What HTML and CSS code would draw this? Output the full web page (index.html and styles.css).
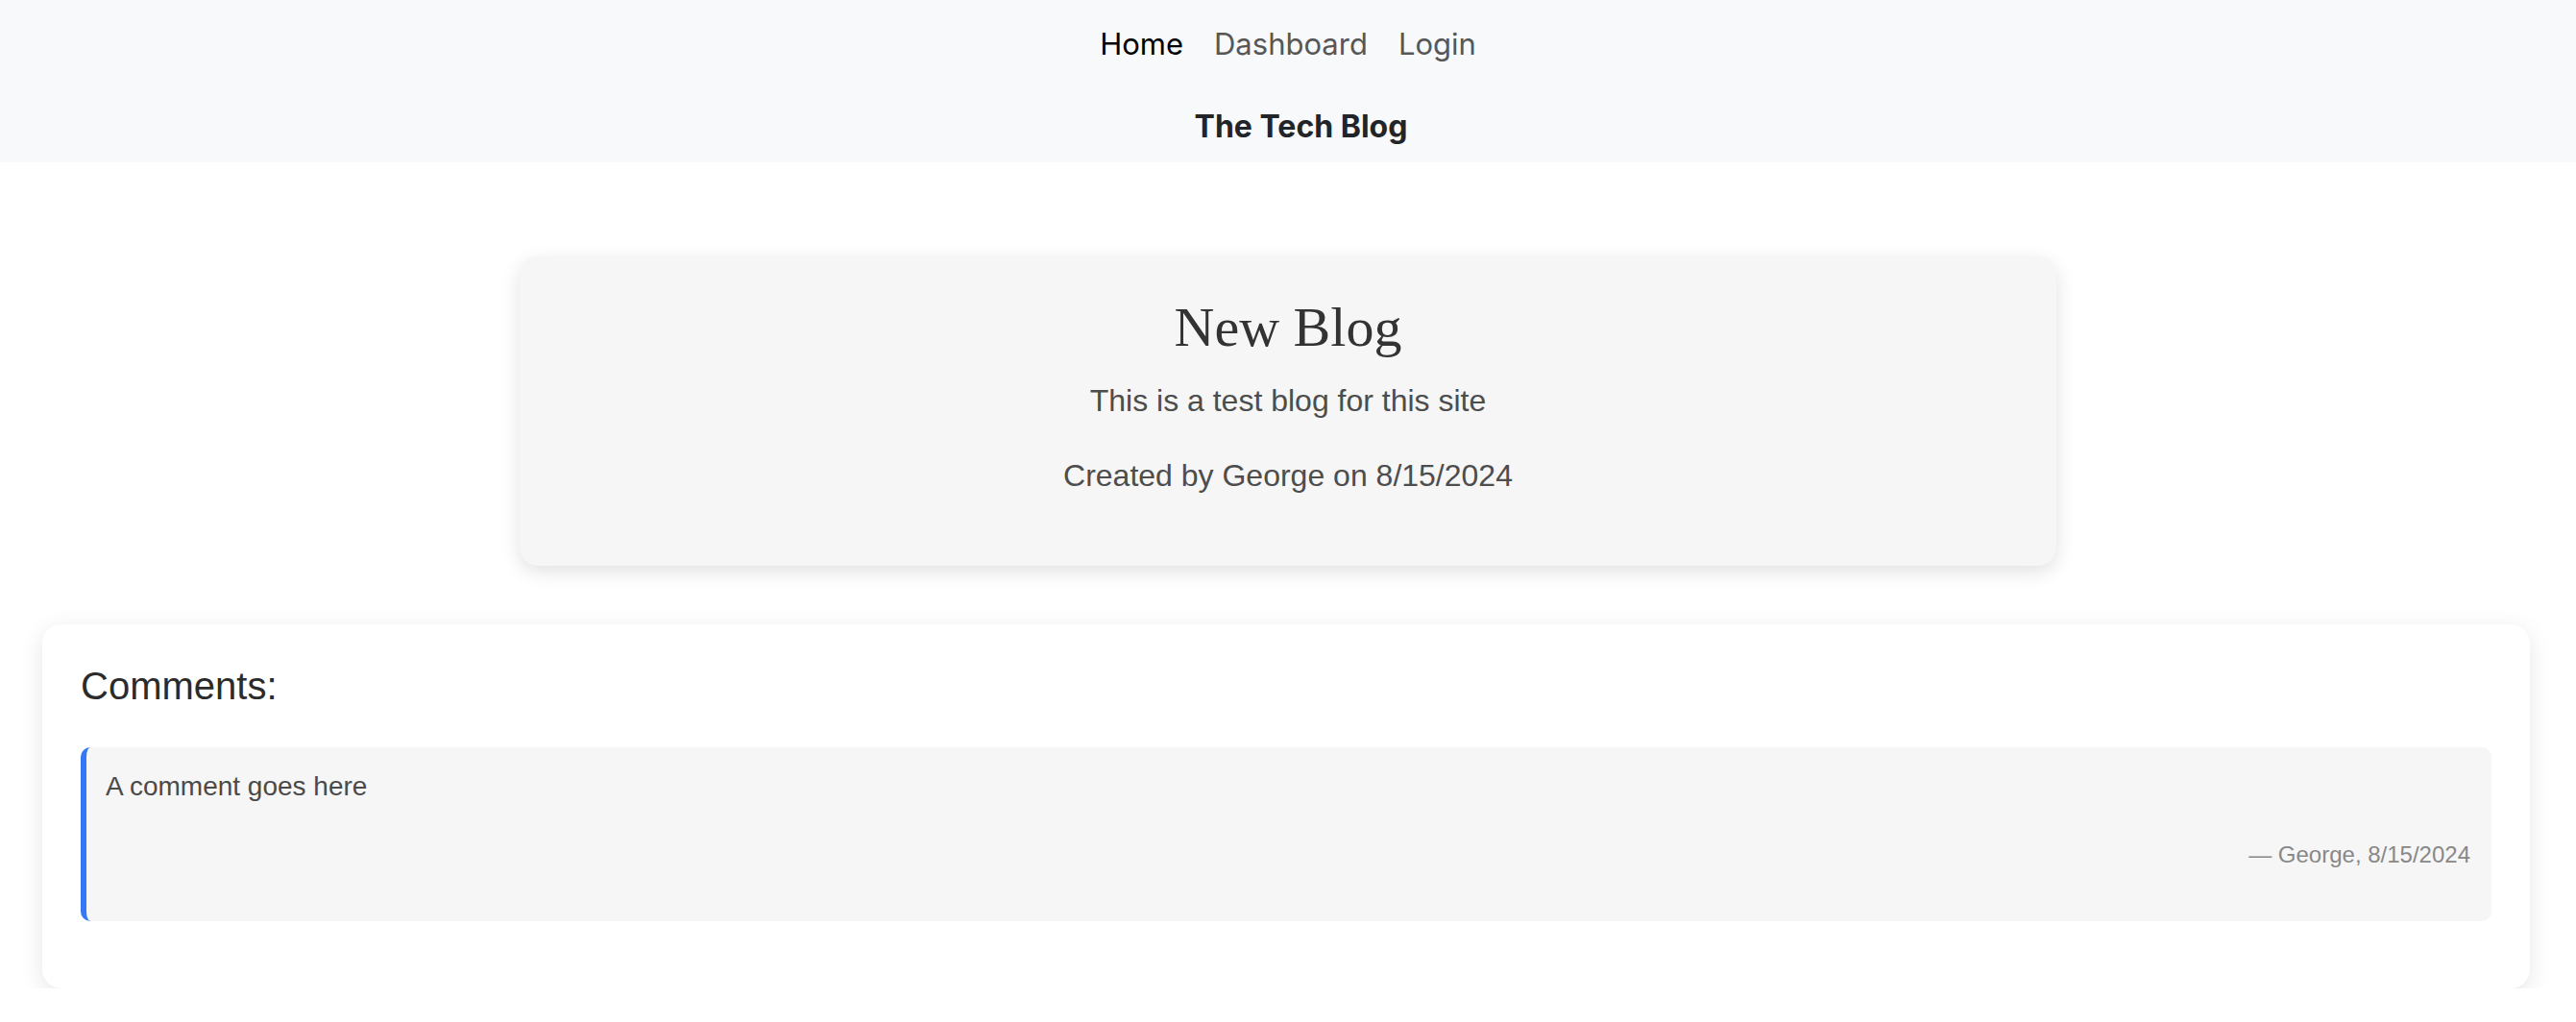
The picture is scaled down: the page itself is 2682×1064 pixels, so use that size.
FILE: index.html
```html
<!DOCTYPE html>
<html lang="en">
<head>
<meta charset="utf-8">
<title>The Tech Blog</title>
<link rel="stylesheet" href="styles.css">
</head>
<body>
<header class="site-header">
  <nav class="nav">
    <a class="nav-link active" href="#">Home</a>
    <a class="nav-link" href="#">Dashboard</a>
    <a class="nav-link" href="#">Login</a>
  </nav>
  <div class="brand">The Tech Blog</div>
</header>
<main class="main">
  <section class="post-card">
    <h2 class="post-title">New Blog</h2>
    <p class="post-text">This is a test blog for this site</p>
    <p class="post-meta">Created by George on 8/15/2024</p>
  </section>
  <section class="comments-card">
    <h3 class="comments-title">Comments:</h3>
    <div class="comment">
      <p class="comment-text">A comment goes here</p>
      <p class="comment-meta">— George, 8/15/2024</p>
    </div>
  </section>
</main>
</body>
</html>
```
FILE: styles.css
```css
* { box-sizing: border-box; }
html, body { margin: 0; padding: 0; background: #ffffff; }
body { font-family: "Liberation Sans", Arial, sans-serif; color: #333; }

.site-header {
  background: #f8f9fa;
  height: 169px;
  padding-top: 22px;
  display: flex;
  flex-direction: column;
  align-items: center;
}
.nav {
  display: flex;
  justify-content: center;
  height: 48px;
  align-items: center;
}
.nav-link {
  font-family: Inter, "Noto Sans", sans-serif;
  font-size: 31px;
  line-height: 48px;
  padding: 0 16px;
  color: #575757;
  text-decoration: none;
}
.nav-link.active { color: #000; }
.brand {
  margin-top: 36px;
  margin-left: 27px;
  font-family: Inter, "Noto Sans", sans-serif;
  font-weight: 700;
  font-size: 32px;
  line-height: 52px;
  color: #212529;
}

.main { padding: 98px 44px 0; }

.post-card {
  width: 1600px;
  margin: 0 auto;
  background: #f6f6f6;
  border-radius: 20px;
  padding: 40px 40px 38px;
  text-align: center;
  box-shadow: 0 6px 20px rgba(0, 0, 0, 0.12);
}
.post-title {
  margin: 0 0 19px;
  font-family: Georgia, "Liberation Serif", serif;
  font-weight: 400;
  font-size: 58px;
  line-height: 67px;
  color: #333;
}
.post-text, .post-meta {
  margin: 0;
  font-size: 32px;
  line-height: 48px;
  color: #4d4d4d;
}
.post-text { margin-bottom: 30px; }
.post-meta { margin-bottom: 32px; }

.comments-card {
  margin: 61px 4px 0 0;
  background: #fff;
  border-radius: 20px;
  padding: 40px 40px 40px;
  box-shadow: 0 6px 24px rgba(0, 0, 0, 0.1);
}
.comments-title {
  margin: 0 0 40px;
  font-weight: 400;
  font-size: 40px;
  line-height: 48px;
  color: #2b2b2b;
}
.comment {
  background: #f6f6f6;
  border-left: 6px solid #3478f6;
  border-radius: 10px;
  padding: 20px 22px 20px 20px;
  margin-bottom: 30px;
  height: 181px;
}
.comment-text {
  margin: 0 0 32px;
  font-size: 28px;
  line-height: 42px;
  color: #4a4a4a;
}
.comment-meta {
  margin: 0;
  text-align: right;
  font-size: 24px;
  line-height: 36px;
  color: #888;
}
```
